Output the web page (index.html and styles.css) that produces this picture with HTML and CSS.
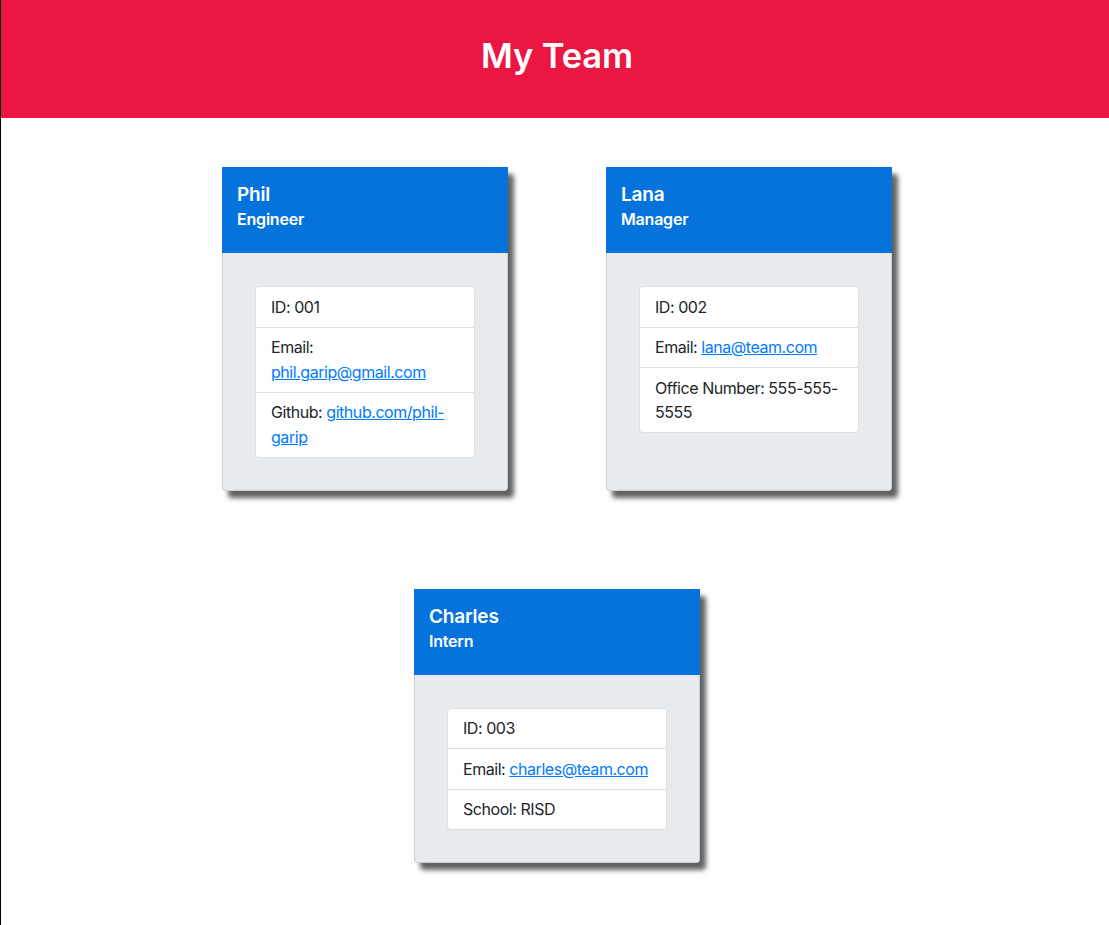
FILE: index.html
```html
<!DOCTYPE html>
<html lang="en">
<head>
<meta charset="utf-8">
<title>My Team</title>
<link rel="stylesheet" href="styles.css">
</head>
<body>
<div class="page">
  <header class="banner">
    <h1 class="banner-title">My Team</h1>
  </header>
  <main class="team">
    <article class="card">
      <div class="card-head">
        <h2 class="card-name">Phil</h2>
        <h3 class="card-role">Engineer</h3>
      </div>
      <div class="card-body">
        <ul class="info">
          <li class="info-item">ID: 001</li>
          <li class="info-item">Email: <a href="#">phil.garip@gmail.com</a></li>
          <li class="info-item">Github: <a href="#">github.com/phil-garip</a></li>
        </ul>
      </div>
    </article>
    <article class="card">
      <div class="card-head">
        <h2 class="card-name">Lana</h2>
        <h3 class="card-role">Manager</h3>
      </div>
      <div class="card-body">
        <ul class="info">
          <li class="info-item">ID: 002</li>
          <li class="info-item">Email: <a href="#">lana@team.com</a></li>
          <li class="info-item">Office Number: 555-555-5555</li>
        </ul>
      </div>
    </article>
    <article class="card">
      <div class="card-head">
        <h2 class="card-name">Charles</h2>
        <h3 class="card-role">Intern</h3>
      </div>
      <div class="card-body">
        <ul class="info">
          <li class="info-item">ID: 003</li>
          <li class="info-item">Email: <a href="#">charles@team.com</a></li>
          <li class="info-item">School: RISD</li>
        </ul>
      </div>
    </article>
  </main>
</div>
</body>
</html>
```
FILE: styles.css
```css
* { box-sizing: border-box; }

html, body {
  margin: 0;
  padding: 0;
  background: #fff;
}

body {
  font-family: Inter, "Noto Sans", "Liberation Sans", sans-serif;
  font-size: 16px;
  line-height: 1.5;
  color: #212529;
}

.page {
  border-left: 1px solid #000;
  min-height: 100vh;
}

.banner {
  background: #ec1642;
  height: 118px;
  display: flex;
  align-items: center;
  justify-content: center;
  padding: 0 0 7px 4px;
}

.banner-title {
  margin: 0;
  color: #fff;
  font-size: 34.5px;
  font-weight: 600;
  line-height: 1.2;
  letter-spacing: -0.1px;
}

.team {
  width: 670px;
  margin: 49px auto 0;
  position: relative;
  left: 2px;
  display: flex;
  flex-wrap: wrap;
  justify-content: center;
  column-gap: 98px;
  row-gap: 98px;
  padding-bottom: 40px;
}

.card {
  width: 286px;
  display: flex;
  flex-direction: column;
  background: #e7ebee;
  border: 1px solid rgba(0, 0, 0, 0.12);
  border-radius: 4px;
  box-shadow: 6px 7px 5px rgba(0, 0, 0, 0.62);
}

.card-head {
  background: #0673dc;
  color: #fff;
  padding: 16px 15px 24px;
  margin: -1px -1px 0;
}

.card-name {
  margin: 0 0 3px;
  font-size: 19px;
  font-weight: 600;
  line-height: 24px;
  letter-spacing: -0.2px;
}

.card-role {
  margin: 0;
  font-size: 16px;
  font-weight: 600;
  line-height: 19px;
  letter-spacing: -0.2px;
}

.card-body {
  flex: 1;
  padding: 33px 32px 32px;
}

.info {
  list-style: none;
  margin: 0;
  padding: 0;
  background: #fff;
  border: 1px solid #dfdfdf;
  border-radius: 4px;
}

.info-item {
  padding: 7.5px 15px 7.5px;
  line-height: 24.5px;
  letter-spacing: -0.45px;
}

.info-item + .info-item {
  border-top: 1px solid #dfdfdf;
}

.info-item a {
  color: #007bff;
  text-decoration: underline;
}
```
